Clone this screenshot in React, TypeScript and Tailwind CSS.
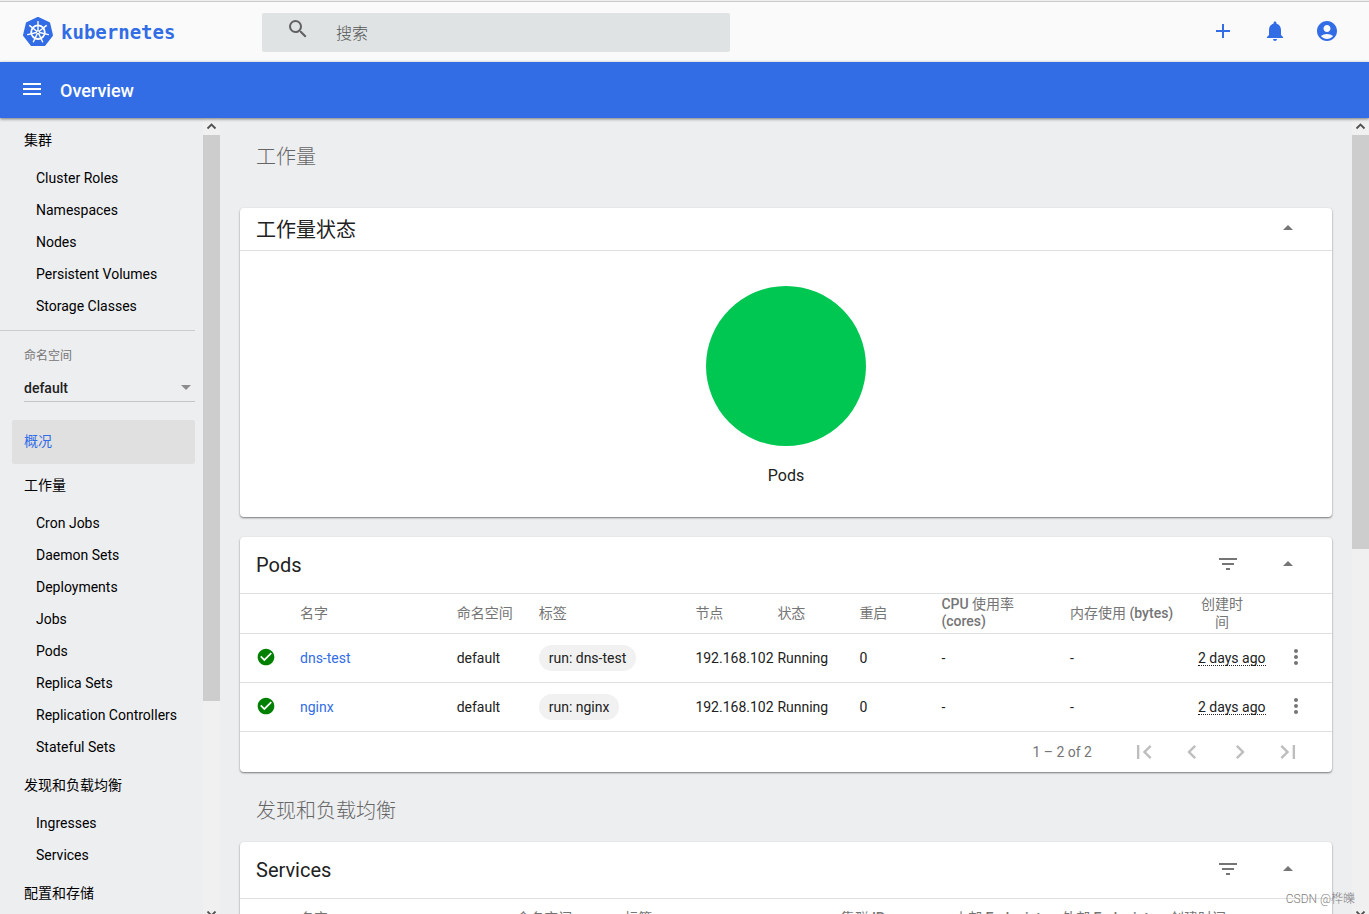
import { ReactNode } from 'react';
import {
  MdAccountCircle,
  MdAdd,
  MdArrowDropUp,
  MdCheckCircle,
  MdChevronLeft,
  MdChevronRight,
  MdFilterList,
  MdFirstPage,
  MdLastPage,
  MdMenu,
  MdMoreVert,
  MdNotifications,
  MdSearch,
} from 'react-icons/md';

const navCluster = ['Cluster Roles', 'Namespaces', 'Nodes', 'Persistent Volumes', 'Storage Classes'];
const navWorkloads = [
  'Cron Jobs',
  'Daemon Sets',
  'Deployments',
  'Jobs',
  'Pods',
  'Replica Sets',
  'Replication Controllers',
  'Stateful Sets',
];
const navDiscovery = ['Ingresses', 'Services'];

const pods = [
  { name: 'dns-test', namespace: 'default', label: 'run: dns-test', node: '192.168.102', status: 'Running', restarts: 0, age: '2 days ago' },
  { name: 'nginx', namespace: 'default', label: 'run: nginx', node: '192.168.102', status: 'Running', restarts: 0, age: '2 days ago' },
];

const Logo = () => {
  const spokes = [0, 1, 2, 3, 4, 5, 6].map(i => (i * 360) / 7);
  return (
    <svg viewBox="0 0 32 32" className="size-8" aria-hidden="true">
      <path
        d="M16 2.2 27 7.4 29.8 19.3 22.2 28.9H9.8L2.2 19.3 5 7.4Z"
        fill="#326de6"
        stroke="#326de6"
        strokeWidth="2.4"
        strokeLinejoin="round"
      />
      <g stroke="#fff" fill="none">
        <circle cx="16" cy="16.2" r="6.8" strokeWidth="1.8" />
        {spokes.map(angle => (
          <path key={angle} d="M16 14.6V5.6" strokeWidth="1.4" strokeLinecap="round" transform={`rotate(${angle} 16 16.2)`} />
        ))}
        <circle cx="16" cy="16.2" r="1.5" strokeWidth="1" />
      </g>
    </svg>
  );
};

const Scrollbar = ({ thumb }: { thumb: string }) => (
  <div className="flex w-[17px] shrink-0 flex-col items-center bg-[#f0f0f0]" aria-hidden="true">
    <svg viewBox="0 0 17 17" className="size-[17px] shrink-0">
      <path d="M4.5 10.5 8.5 6.5l4 4" fill="none" stroke="#505050" strokeWidth="1.8" />
    </svg>
    <div className={`w-full shrink-0 bg-[#cdcdcd] ${thumb}`} />
    <div className="flex-1" />
    <svg viewBox="0 0 17 3" className="h-[3px] w-[17px] shrink-0">
      <path d="M4.5 0.5l4 4 4-4" fill="none" stroke="#505050" strokeWidth="1.8" />
    </svg>
  </div>
);

const NavGroup = ({ title, items }: { title: string; items: string[] }) => (
  <div>
    <a href="#" className="block h-11 pl-6 leading-[44px]">{title}</a>
    <ul>
      {items.map(item => (
        <li key={item}>
          <a href="#" className="block h-8 pl-9 leading-8">{item}</a>
        </li>
      ))}
    </ul>
  </div>
);

const Card = ({ title, filter, compact, children }: { title: string; filter?: boolean; compact?: boolean; children: ReactNode }) => (
  <section className="rounded bg-white shadow-[0_1px_2px_rgba(0,0,0,0.5)]">
    <div className={`flex items-center border-b border-[#e0e0e0] pl-4 pr-8 ${compact ? 'h-[43px]' : 'h-[57px]'}`}>
      <h2 className={compact ? 'flex-1 pt-0.5 text-xl' : 'flex-1 text-xl'}>{title}</h2>
      {filter && (
        <button aria-label="Filter" className="mb-0.5 mr-9 text-[#757575]"><MdFilterList className="size-6" /></button>
      )}
      <button aria-label="Collapse" className="mb-0.5 text-[#757575]"><MdArrowDropUp className="size-6" /></button>
    </div>
    {children}
  </section>
);

const App = () => {
  return (
    <div className="flex h-screen flex-col overflow-hidden bg-[#edeef0] font-[Roboto,'Noto_Sans_CJK_SC',sans-serif] text-sm text-[#212121]">
      <header className="mt-px flex h-[61px] shrink-0 items-center border-t border-[#cccccc] bg-[#fafafa] pl-[22px] pr-[30px]">
        <a href="#" className="flex w-60 items-center gap-[7px] text-[#326de6]">
          <Logo />
          <span className="pt-0.5 font-['DejaVu_Sans_Mono'] text-[19px] font-bold">kubernetes</span>
        </a>
        <label className="flex h-[39px] w-[468px] items-center rounded-xs bg-[#dfe3e4] pl-6 text-[#616161]">
          <MdSearch className="mb-1.5 size-6" />
          <input
            aria-label="搜索"
            placeholder="搜索"
            className="ml-[26px] flex-1 bg-transparent pt-1 text-base font-light outline-none placeholder:text-[#555555]"
          />
        </label>
        <div className="mb-0.5 ml-auto flex gap-7 text-[#326de6]">
          <button aria-label="Create"><MdAdd className="size-6" /></button>
          <button aria-label="Notifications"><MdNotifications className="size-6" /></button>
          <button aria-label="Account"><MdAccountCircle className="size-6" /></button>
        </div>
      </header>

      <div className="relative z-10 flex h-14 shrink-0 items-center gap-4 bg-[#326de6] pl-5 text-white shadow-[0_1px_3px_rgba(0,0,0,0.5)]">
        <button aria-label="Menu" className="mb-0.5"><MdMenu className="size-6" /></button>
        <h1 className="pt-0.5 text-lg font-medium">Overview</h1>
      </div>

      <div className="flex min-h-0 flex-1">
        <nav className="flex w-[220px] shrink-0 text-black">
          <div className="min-w-0 flex-1 overflow-hidden pr-2">
            <NavGroup title="集群" items={navCluster} />
            <div className="mt-2 border-t border-[#cccccc] pl-6 pt-4">
              <label htmlFor="namespace" className="block text-xs leading-[18px] text-[#757575]">命名空间</label>
              <div className="relative mt-2 border-b border-[#c6c6c8]">
                <select id="namespace" className="h-7 w-full appearance-none bg-transparent pt-0.5 font-medium text-[#212121]">
                  <option>default</option>
                </select>
                <svg viewBox="0 0 10 5" className="pointer-events-none absolute right-1 top-3 h-[5px] w-2.5">
                  <path d="M0 0h10L5 5z" fill="#8c8c8d" />
                </svg>
              </div>
            </div>
            <a href="#" className="ml-3 mt-[18px] block h-11 rounded-xs bg-[#e0e0e0] pl-3 leading-[42px] text-[#326de6]">概况</a>
            <div className="-mt-px">
              <NavGroup title="工作量" items={navWorkloads} />
              <NavGroup title="发现和负载均衡" items={navDiscovery} />
              <NavGroup title="配置和存储" items={[]} />
            </div>
          </div>
          <Scrollbar thumb="h-[566px]" />
        </nav>

        <main className="min-w-0 flex-1 overflow-hidden px-5">
          <h2 className="px-4 pb-9 pt-6 text-xl font-light leading-[30px] text-[#666666]">工作量</h2>

          <Card title="工作量状态" compact>
            <div className="flex flex-col items-center gap-[18px] pb-[29px] pt-[35px]">
              <svg viewBox="0 0 160 160" className="size-40" role="img" aria-label="Pods">
                <circle cx="80" cy="80" r="80" fill="#00c752" />
              </svg>
              <span className="text-base">Pods</span>
            </div>
          </Card>

          <div className="mt-5">
            <Card title="Pods" filter>
              <table className="w-full table-fixed text-left">
                <colgroup>
                  <col className="w-[60px]" />
                  <col className="w-[14.35%]" />
                  <col className="w-[82px]" />
                  <col className="w-[14.35%]" />
                  <col className="w-[82px]" />
                  <col className="w-[82px]" />
                  <col className="w-[82px]" />
                  <col />
                  <col className="w-[128px]" />
                  <col className="w-[68px]" />
                  <col className="w-[66px]" />
                </colgroup>
                <thead className="text-[#757575]">
                  <tr className="h-[39px] border-b border-[#e0e0e0] leading-[17px] [&>th]:p-0 [&>th]:font-normal">
                    <th />
                    <th>名字</th>
                    <th>命名空间</th>
                    <th>标签</th>
                    <th>节点</th>
                    <th>状态</th>
                    <th>重启</th>
                    <th>
                      <span className="font-medium">CPU</span> 使用率
                      <br />
                      <span className="font-medium">(cores)</span>
                    </th>
                    <th className="whitespace-nowrap">内存使用 <span className="font-medium">(bytes)</span></th>
                    <th>
                      <div className="w-12 text-center leading-[18px]">创建时间</div>
                    </th>
                    <th />
                  </tr>
                </thead>
                <tbody>
                  {pods.map(pod => (
                    <tr key={pod.name} className="h-[49px] border-b border-[#e0e0e0] [&>td]:p-0">
                      <td><MdCheckCircle className="mb-0.5 ml-4 size-5 text-[#008000]" /></td>
                      <td><a href="#" className="text-[#326de6]">{pod.name}</a></td>
                      <td>{pod.namespace}</td>
                      <td><span className="inline-block rounded-full bg-[#f1f1f1] px-2.5 leading-[26px]">{pod.label}</span></td>
                      <td>{pod.node}</td>
                      <td>{pod.status}</td>
                      <td>{pod.restarts}</td>
                      <td>-</td>
                      <td>-</td>
                      <td className="whitespace-nowrap">
                        <span className="inline-block border-b border-dotted border-[#212121] leading-[13px]">{pod.age}</span>
                      </td>
                      <td>
                        <button aria-label="Actions" className="mb-0.5 ml-[18px] block text-[#757575]"><MdMoreVert className="size-6" /></button>
                      </td>
                    </tr>
                  ))}
                </tbody>
              </table>
              <div className="flex h-10 items-center justify-end gap-5 pr-[30px] text-[#bdbdbd]">
                <span className="mr-[18px] text-[#757575]">1 – 2 of 2</span>
                <button aria-label="First page"><MdFirstPage className="size-7" /></button>
                <button aria-label="Previous page"><MdChevronLeft className="size-7" /></button>
                <button aria-label="Next page"><MdChevronRight className="size-7" /></button>
                <button aria-label="Last page"><MdLastPage className="size-7" /></button>
              </div>
            </Card>
          </div>

          <h2 className="px-4 pb-4 pt-6 text-xl font-light leading-[30px] text-[#666666]">发现和负载均衡</h2>

          <Card title="Services" filter>
            <table className="w-full table-fixed text-left">
              <colgroup>
                <col className="w-[60px]" />
                <col className="w-[19.8%]" />
                <col className="w-[108px]" />
                <col className="w-[19.8%]" />
                <col />
                <col className="w-[108px]" />
                <col className="w-[108px]" />
                <col className="w-[162px]" />
              </colgroup>
              <thead className="text-[#757575]">
                <tr className="h-[39px] [&>th]:p-0 [&>th]:font-normal">
                  <th />
                  <th>名字</th>
                  <th>命名空间</th>
                  <th>标签</th>
                  <th>集群 <span className="font-medium">IP</span></th>
                  <th>内部 <span className="font-medium">Endpoints</span></th>
                  <th>外部 <span className="font-medium">Endpoints</span></th>
                  <th>创建时间</th>
                </tr>
              </thead>
            </table>
          </Card>
        </main>
        <Scrollbar thumb="h-[414px]" />
      </div>

      <p className="absolute bottom-1.5 right-3.5 z-20 text-xs font-light leading-[18px] text-[#808080]">CSDN @桦皪</p>
    </div>
  );
};

export default App;
